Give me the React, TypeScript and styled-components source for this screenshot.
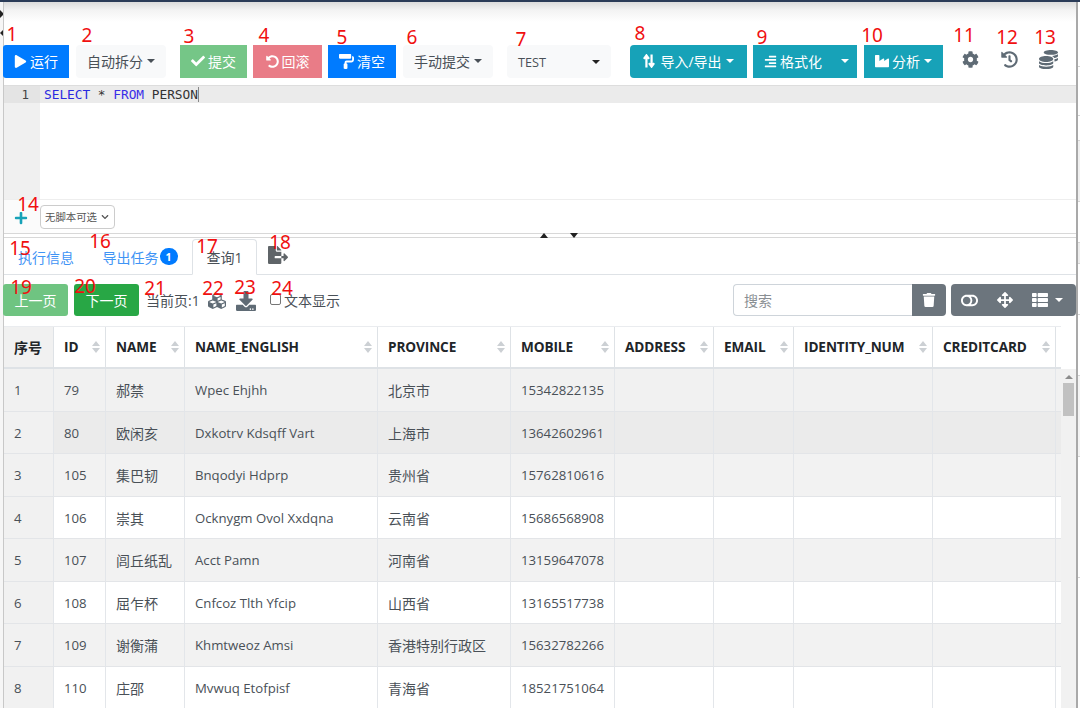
import React from "react";
import styled, { createGlobalStyle } from "styled-components";
import {
  FaPlay, FaCheck, FaUndoAlt, FaPaintRoller, FaAlignRight, FaIndustry, FaCog, FaHistory, FaCoins,
  FaPlus, FaFileExport, FaCubes, FaDownload, FaTrash, FaToggleOff, FaArrowsAlt, FaThList, FaChevronDown,
} from "react-icons/fa";

const Global = createGlobalStyle`
  html, body { margin: 0; padding: 0; background: #fff; }
  body { font-family: "Open Sans", "Noto Sans CJK SC", sans-serif; }
`;

const Root = styled.div`
  position: relative; width: 1080px; height: 708px; overflow: hidden; background: #fff;
  display: flex; flex-direction: column; color: #212529;
`;
const TopStrip = styled.div`height: 2px; flex: none; background: #2b3c58;`;
const Body = styled.div`flex: 1; min-height: 0; display: flex;`;
const Rail = styled.div`
  width: 3px; flex: none; border-right: 1px solid #c8c8c8; background: #f6f6f6; overflow: hidden;
  display: flex; flex-direction: column; padding-top: 8px; box-sizing: content-box; gap: 11px;
`;
const RailArrow = styled.div<{ $left?: boolean }>`
  width: 0; height: 0; border-top: 4px solid transparent; border-bottom: 4px solid transparent;
  ${(p) => (p.$left ? "border-right: 4px solid #222;" : "border-left: 4px solid #222;")}
`;
const Main = styled.div`width: 1072px; flex: none; display: flex; flex-direction: column; min-width: 0;`;
const Peek = styled.div`
  flex: 1; border-left: 2px solid #a9a9a9; background: #fff; display: flex; flex-direction: column;
`;
const PeekLine = styled.div<{ $h: number; $bg?: string }>`
  height: ${(p) => p.$h}px; flex: none; background: ${(p) => p.$bg || "#fff"}; border-bottom: 1px solid #d4d4d4;
`;
const Shade = styled.div`height: 43px; flex: none; background: linear-gradient(#dcdcdc 0, #f3f3f3 8px, #fff 20px);`;
const Toolbar = styled.div`height: 33px; flex: none; display: flex; align-items: stretch; margin-left: -1px;`;

const Btn = styled.div<{ $w: number; $ml?: number; $bg: string; $fg?: string; $r?: string; $gap?: number }>`
  width: ${(p) => p.$w}px; margin-left: ${(p) => p.$ml || 0}px; background: ${(p) => p.$bg};
  color: ${(p) => p.$fg || "#fff"}; border-radius: ${(p) => p.$r || "0"}; flex: none;
  display: flex; align-items: center; justify-content: center; gap: ${(p) => p.$gap ?? 3}px; font-size: 14px; white-space: nowrap;
  padding-bottom: 1px; box-sizing: border-box;
  svg { flex: none; }
`;
const DropCaret = styled.span<{ $ml?: number; $c?: string }>`
  display: inline-block; width: 0; height: 0; flex: none; margin-left: ${(p) => p.$ml ?? 1}px;
  border-left: 4px solid transparent; border-right: 4px solid transparent;
  border-top: 4.5px solid ${(p) => p.$c || "currentColor"};
`;
const SelectBtn = styled(Btn)`justify-content: space-between; padding: 0 11px; box-sizing: border-box; font-size: 12.7px; color: #495057;`;
const SplitBtn = styled(Btn)`justify-content: flex-start; padding: 0 8px 1px 11px; box-sizing: border-box;`;
const PushRight = styled.span`margin-left: auto; display: inline-flex;`;
const IconBtn = styled.div<{ $w: number }>`
  width: ${(p) => p.$w}px; flex: none; display: flex; align-items: center; justify-content: center; color: #5f6b75; padding-bottom: 4px;
`;
const Editor = styled.div`
  margin-top: 7px; height: 115px; flex: none; box-sizing: border-box; border-top: 1px solid #ddd; display: flex; position: relative;
  border-bottom: 1px solid #eee;
`;
const Gutter = styled.div`width: 36px; flex: none; background: #f0f0f0;`;
const GutterNum = styled.div`
  height: 17px; background: #e4e4e4; text-align: right; padding-right: 11px; box-sizing: border-box;
  font: 12.5px/17px "DejaVu Sans Mono", monospace; color: #444;
`;
const Code = styled.div`flex: 1;`;
const CodeLine = styled.div`
  height: 17px; background: #ebebeb; padding-left: 4px; font: 12.83px/17px "DejaVu Sans Mono", monospace;
  letter-spacing: -0.03px; color: #333; white-space: pre;
`;
const Kw = styled.span<{ $c: string }>`color: ${(p) => p.$c};`;
const Caret = styled.span`border-right: 1px solid #888;`;
const ScriptRow = styled.div`height: 33px; flex: none; display: flex; align-items: center;`;
const AddBox = styled.div`
  width: 36px; height: 100%; background: #fbfbfb; display: flex; align-items: center; justify-content: center; color: #17a2b8; flex: none; padding: 2px 2px 0 0; box-sizing: border-box;
`;
const ScriptSelect = styled.div`
  width: 75px; height: 24px; box-sizing: border-box; border: 1px solid #ccc; border-radius: 4px; font-size: 10.4px; color: #555;
  display: flex; align-items: center; justify-content: space-between; padding: 0 5px 0 4px; white-space: nowrap;
`;
const Splitter = styled.div`
  height: 5px; flex: none; border-top: 1px solid #d8d8d8; border-bottom: 1px solid #d8d8d8; box-sizing: border-box;
  display: flex; align-items: center; justify-content: center; gap: 22px; padding-left: 38px;
`;
const SplitArrow = styled.div<{ $up?: boolean }>`
  width: 0; height: 0; border-left: 4px solid transparent; border-right: 4px solid transparent;
  ${(p) => (p.$up ? "border-bottom: 5px solid #222;" : "border-top: 5px solid #222;")}
`;
const Tabs = styled.div`
  height: 37px; flex: none; border-bottom: 1px solid #dee2e6; box-sizing: border-box; display: flex; align-items: flex-end; font-size: 14px;
`;
const Tab = styled.div<{ $w: number; $active?: boolean; $ml?: number }>`
  width: ${(p) => p.$w}px; margin-left: ${(p) => p.$ml || 0}px; height: 36px; flex: none; box-sizing: border-box; margin-bottom: -1px;
  display: flex; align-items: center; justify-content: center; padding-bottom: 1px; white-space: nowrap;
  color: ${(p) => (p.$active ? "#495057" : "#3f94f5")};
  ${(p) => p.$active && "background:#fff;border:1px solid #dee2e6;border-bottom-color:#fff;border-radius:4px 4px 0 0;"}
`;
const Badge = styled.span`
  display: inline-flex; width: 18px; height: 17px; margin-left: 1px; border-radius: 9px; background: #007bff; color: #fff;
  font-size: 10.5px; font-weight: 700; align-items: center; justify-content: center;
`;
const TabIcon = styled.div`width: 32px; margin-left: 11px; height: 100%; flex: none; display: flex; align-items: center; color: #5f6468; padding-bottom: 3px; box-sizing: border-box;`;
const PageBar = styled.div`
  height: 51px; flex: none; box-sizing: border-box; margin-left: -1px; padding: 9px 0 10px; display: flex; align-items: stretch;
`;
const PageBtn = styled.div<{ $bg: string; $ml?: number }>`
  width: 65px; margin-left: ${(p) => p.$ml || 0}px; background: ${(p) => p.$bg}; color: #fff; border-radius: 3px; font-size: 14px;
  display: flex; align-items: center; justify-content: center; flex: none;
`;
const PageText = styled.div<{ $w: number; $ml?: number }>`
  width: ${(p) => p.$w}px; margin-left: ${(p) => p.$ml || 0}px; flex: none; display: flex; align-items: center; font-size: 14px; color: #495057; white-space: nowrap; padding-bottom: 1px;
`;
const PageIcon = styled.div<{ $w: number }>`width: ${(p) => p.$w}px; flex: none; display: flex; align-items: center; justify-content: center; color: #5f6b75; padding-top: 2px;`;
const Check = styled.span`
  width: 11px; height: 11px; border: 1px solid #767676; border-radius: 2px; box-sizing: border-box; margin-right: 3px; display: inline-block; background: #fff; margin-bottom: 1px;
`;
const Search = styled.div`
  margin-left: auto; width: 179px; flex: none; box-sizing: border-box; border: 1px solid #ced4da; border-right: 0; border-radius: 4px 0 0 4px;
  color: #8a8f94; font-size: 14px; display: flex; align-items: center; padding-left: 10px;
`;
const TrashBtn = styled.div`
  width: 34px; flex: none; background: #6c757d; color: #fff; border-radius: 0 4px 4px 0; display: flex; align-items: center; justify-content: center;
`;
const ToolGroup = styled.div`
  width: 125px; margin-left: 5px; flex: none; background: #6c757d; color: #fff; border-radius: 4px; display: flex; align-items: center; padding-left: 10px; box-sizing: border-box; gap: 19px;
`;
const TableIcon = styled.span`display: inline-flex; align-items: center;`;
const Cols = "50px 52px 79px 193px 133px 104px 99px 80px 139px 123px 5px";
const HeadRow = styled.div`
  display: grid; grid-template-columns: ${Cols}; height: 43px; flex: none; box-sizing: border-box; width: 1057px;
  border-top: 1px solid #eaecef; border-bottom: 2px solid #dee2e6; font-weight: 700; color: #212529;
`;
const HeadCell = styled.div<{ $first?: boolean }>`
  border-right: 1px solid #dee2e6; background: ${(p) => (p.$first ? "#f1f1f1" : "#fff")}; display: flex; align-items: center; justify-content: space-between;
  padding: 0 5px 1px 10px; box-sizing: border-box; letter-spacing: -0.1px; font-size: ${(p) => (p.$first ? 14 : 13.6)}px; white-space: nowrap;
  &:last-child { border-right: 0; }
`;
const BodyWrap = styled.div`flex: 1; min-height: 0; display: flex; overflow: hidden;`;
const Rows = styled.div`width: 1057px; flex: none;`;
const Row = styled.div<{ $bg: string }>`
  display: grid; grid-template-columns: ${Cols}; height: 42.5px; box-sizing: border-box; background: ${(p) => p.$bg}; border-bottom: 1px solid #e3e5e8;
`;
const Cell = styled.div<{ $first?: boolean; $cjk?: boolean }>`
  border-right: 1px solid #e3e6ea; padding: 1px 0 0 10px; display: flex; align-items: center; box-sizing: border-box; color: #495057; white-space: nowrap;
  font-size: ${(p) => (p.$cjk ? 14 : 13.2)}px; ${(p) => p.$first && "background:#f1f1f1;"}
  &:last-child { border-right: 0; }
`;
const ScrollTrack = styled.div`width: 15px; flex: none; background: #f1f1f1; display: flex; flex-direction: column; align-items: center; padding-top: 6px; box-sizing: border-box;`;
const ScrollUp = styled.div`width: 0; height: 0; border-left: 4px solid transparent; border-right: 4px solid transparent; border-bottom: 4px solid #8c8c8c;`;
const ScrollThumb = styled.div`width: 11px; height: 33px; margin-top: 4px; background: #c1c1c1;`;
const Mark = styled.div<{ $x: number; $y: number }>`
  position: absolute; left: ${(p) => p.$x}px; top: ${(p) => p.$y}px; transform: translate(-50%, -50%);
  color: #f01010; font-size: 19px; line-height: 1; font-family: "Noto Sans", sans-serif;
`;

const Sort = () => (
  <svg width="8" height="12" viewBox="0 0 8 12"><path d="M4 0 8 5H0Z M4 12 0 7H8Z" fill="#ccd0d4" /></svg>
);
const UpDown = () => (
  <svg width="12" height="14" viewBox="0 0 14 15" fill="none" stroke="#fff" strokeWidth="2.6">
    <path d="M4 15V2M1 5l3-4 3 4M10 0v13M7 10l3 4 3-4" />
  </svg>
);

const marks: [string, number, number][] = [
  ["1", 12, 34], ["2", 87, 35], ["3", 189, 36], ["4", 264, 35], ["5", 342, 37], ["6", 412, 37], ["7", 521, 39],
  ["8", 640, 33], ["9", 762, 37], ["10", 872, 35], ["11", 964, 35], ["12", 1007, 37], ["13", 1045, 37],
  ["14", 28, 204], ["15", 20, 248], ["16", 100, 241], ["17", 207, 246], ["18", 280, 242], ["19", 21, 287],
  ["20", 85, 286], ["21", 155, 288], ["22", 213, 288], ["23", 245, 287], ["24", 282, 288],
];
const heads = ["序号", "ID", "NAME", "NAME_ENGLISH", "PROVINCE", "MOBILE", "ADDRESS", "EMAIL", "IDENTITY_NUM", "CREDITCARD"];
const data = [
  ["1", "79", "郝禁", "Wpec Ehjhh", "北京市", "15342822135"],
  ["2", "80", "欧闲亥", "Dxkotrv Kdsqff Vart", "上海市", "13642602961"],
  ["3", "105", "集巴韧", "Bnqodyi Hdprp", "贵州省", "15762810616"],
  ["4", "106", "崇其", "Ocknygm Ovol Xxdqna", "云南省", "15686568908"],
  ["5", "107", "闾丘纸乱", "Acct Pamn", "河南省", "13159647078"],
  ["6", "108", "屈乍杯", "Cnfcoz Tlth Yfcip", "山西省", "13165517738"],
  ["7", "109", "谢衡蒲", "Khmtweoz Amsi", "香港特别行政区", "15632782266"],
  ["8", "110", "庄邵", "Mvwuq Etofpisf", "青海省", "18521751064"],
];
const rowBg = ["#f1f1f1", "#ebebeb", "#f2f2f2", "#fff", "#f2f2f2", "#fff", "#f2f2f2", "#fff"];
const peek: [number, string?][] = [[64], [48], [24], [60, "#f0f0f0"], [40], [20, "#eee"], [50], [60], [80, "#f4f4f4"], [120]];

export default function App() {
  return (
    <Root>
      <Global />
      <TopStrip />
      <Body>
        <Rail><RailArrow /><RailArrow $left /></Rail>
        <Main>
          <Shade />
          <Toolbar>
            <Btn $w={66} $bg="#007bff" $r="3px 0 0 3px"><FaPlay size={13} />运行</Btn>
            <Btn $w={90} $ml={7} $bg="#f8f9fa" $fg="#495057" $r="4px">自动拆分<DropCaret /></Btn>
            <Btn $w={67} $ml={14} $bg="#75c687"><FaCheck size={14} />提交</Btn>
            <Btn $w={69} $ml={6} $bg="#e97c87"><FaUndoAlt size={13} />回滚</Btn>
            <Btn $w={68} $ml={6} $bg="#007bff"><FaPaintRoller size={15} />清空</Btn>
            <Btn $w={90} $ml={7} $bg="#f8f9fa" $fg="#495057" $r="4px">手动提交<DropCaret /></Btn>
            <SelectBtn $w={104} $ml={14} $bg="#f8f9fa" $r="4px">TEST<DropCaret $c="#222" /></SelectBtn>
            <Btn $w={117} $ml={19} $bg="#17a2b8" $r="4px 0 0 4px" $gap={5}><UpDown />导入/导出<DropCaret $ml={-1} /></Btn>
            <SplitBtn $w={104} $ml={6} $bg="#17a2b8"><FaAlignRight size={13} />格式化<PushRight><DropCaret /></PushRight></SplitBtn>
            <Btn $w={79} $ml={7} $bg="#17a2b8"><FaIndustry size={14} />分析<DropCaret /></Btn>
            <IconBtn $w={54}><FaCog size={17} /></IconBtn>
            <IconBtn $w={24}><FaHistory size={17} /></IconBtn>
            <IconBtn $w={54}><FaCoins size={19} /></IconBtn>
          </Toolbar>
          <Editor>
            <Gutter><GutterNum>1</GutterNum></Gutter>
            <Code>
              <CodeLine><Kw $c="#2a2ae0">SELECT</Kw> * <Kw $c="#3a2ee8">FROM</Kw> <Caret>PERSON</Caret></CodeLine>
            </Code>
          </Editor>
          <ScriptRow>
            <AddBox><FaPlus size={14} /></AddBox>
            <ScriptSelect>无脚本可选<FaChevronDown size={8} /></ScriptSelect>
          </ScriptRow>
          <Splitter><SplitArrow $up /><SplitArrow /></Splitter>
          <Tabs>
            <Tab $w={70} $ml={7}>执行信息</Tab>
            <Tab $w={88} $ml={15}>导出任务<Badge>1</Badge></Tab>
            <Tab $w={65} $ml={8} $active>查询1</Tab>
            <TabIcon><FaFileExport size={20} /></TabIcon>
          </Tabs>
          <PageBar>
            <PageBtn $bg="#6fc481">上一页</PageBtn>
            <PageBtn $bg="#28a745" $ml={6}>下一页</PageBtn>
            <PageText $w={61} $ml={7}>当前页:1</PageText>
            <PageIcon $w={19}><FaCubes size={18} /></PageIcon>
            <PageIcon $w={40}><FaDownload size={20} /></PageIcon>
            <PageText $w={80} $ml={4}><Check />文本显示</PageText>
            <Search>搜索</Search>
            <TrashBtn><FaTrash size={14} /></TrashBtn>
            <ToolGroup>
              <FaToggleOff size={17} />
              <FaArrowsAlt size={16} />
              <TableIcon><FaThList size={16} /><DropCaret $ml={7} /></TableIcon>
            </ToolGroup>
          </PageBar>
          <HeadRow>
            {heads.map((h, i) => (
              <HeadCell key={h} $first={i === 0}>{h}{i > 0 && <Sort />}</HeadCell>
            ))}
            <HeadCell />
          </HeadRow>
          <BodyWrap>
            <Rows>
              {data.map((r, i) => (
                <Row key={r[0]} $bg={rowBg[i]}>
                  {heads.map((h, c) => (
                    <Cell key={h} $first={c === 0} $cjk={c === 2 || c === 4}>{r[c] || ""}</Cell>
                  ))}
                  <Cell />
                </Row>
              ))}
            </Rows>
            <ScrollTrack><ScrollUp /><ScrollThumb /></ScrollTrack>
          </BodyWrap>
        </Main>
        <Peek>
          {peek.map(([h, bg], i) => <PeekLine key={i} $h={h} $bg={bg} />)}
        </Peek>
      </Body>
      {marks.map(([t, x, y]) => <Mark key={t} $x={x} $y={y}>{t}</Mark>)}
    </Root>
  );
}
